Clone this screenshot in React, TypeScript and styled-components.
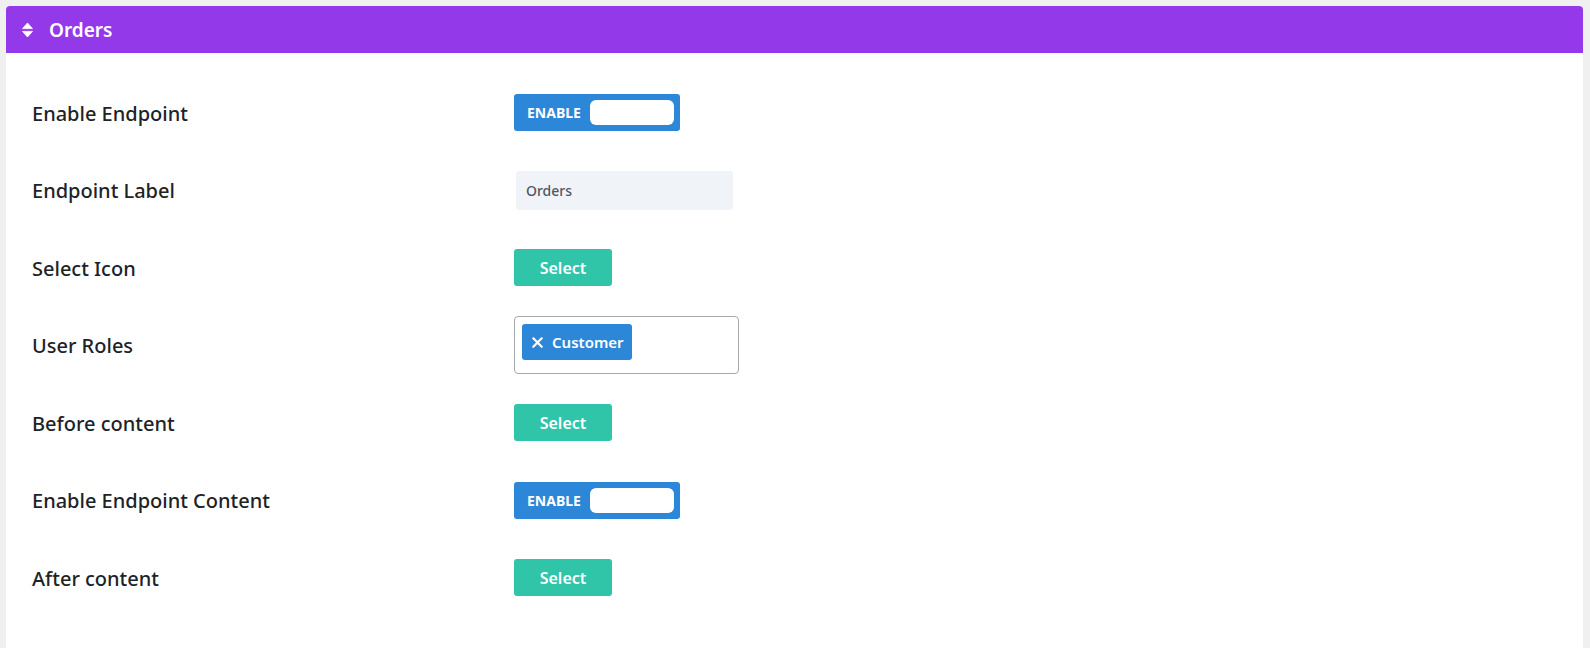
import styled, { createGlobalStyle } from "styled-components";

const GlobalStyle = createGlobalStyle`
  html, body {
    margin: 0;
    padding: 0;
    background: #f0f0f1;
  }
  body {
    font-family: "Noto Sans", "Open Sans", sans-serif;
    color: #1d2327;
  }
`;

const SortIcon = () => (
  <svg width="11" height="16" viewBox="0 0 11 16" aria-hidden="true">
    <path d="M5.5 1 L10.5 6.6 H0.5 Z" fill="#fff" stroke="#fff" strokeWidth="0.8" strokeLinejoin="round" />
    <path d="M5.5 15 L10.5 9.4 H0.5 Z" fill="#fff" stroke="#fff" strokeWidth="0.8" strokeLinejoin="round" />
  </svg>
);

const CloseIcon = () => (
  <svg width="11" height="11" viewBox="0 0 10 10" aria-hidden="true">
    <path d="M1.2 1.2 L8.8 8.8 M8.8 1.2 L1.2 8.8" stroke="#fff" strokeWidth="2" strokeLinecap="round" />
  </svg>
);

const App = () => {
  return (
    <>
      <GlobalStyle />
      <Page>
        <Panel>
          <PanelHeader>
            <SortIcon />
            <Title>Orders</Title>
          </PanelHeader>
          <Body>
            <Row>
              <Label>Enable Endpoint</Label>
              <Toggle>
                <ToggleText>ENABLE</ToggleText>
                <Knob />
              </Toggle>
            </Row>
            <Row>
              <Label>Endpoint Label</Label>
              <TextInput defaultValue="Orders" />
            </Row>
            <Row>
              <Label>Select Icon</Label>
              <SelectButton>Select</SelectButton>
            </Row>
            <Row>
              <Label>User Roles</Label>
              <MultiSelect>
                <Tag>
                  <CloseIcon />
                  Customer
                </Tag>
              </MultiSelect>
            </Row>
            <Row>
              <Label>Before content</Label>
              <SelectButton>Select</SelectButton>
            </Row>
            <Row>
              <Label>Enable Endpoint Content</Label>
              <Toggle>
                <ToggleText>ENABLE</ToggleText>
                <Knob />
              </Toggle>
            </Row>
            <Row>
              <Label>After content</Label>
              <SelectButton>Select</SelectButton>
            </Row>
          </Body>
        </Panel>
      </Page>
    </>
  );
};

const Page = styled.div`
  height: 648px;
  padding: 6px 7px 0 6px;
  box-sizing: border-box;
`;

const Panel = styled.section`
  background: #ffffff;
  height: 100%;
  border-radius: 4px 4px 0 0;
`;

const PanelHeader = styled.header`
  display: flex;
  align-items: center;
  gap: 16px;
  height: 47px;
  padding: 0 16px;
  background: #9339ea;
  border-radius: 4px 4px 0 0;
`;

const Title = styled.h2`
  margin: 0;
  color: #ffffff;
  font-size: 19px;
  font-weight: 600;
`;

const Body = styled.div`
  padding: 21px 0 0 26px;
`;

const Row = styled.div`
  display: grid;
  grid-template-columns: 482px 1fr;
  align-items: center;
  height: 77.5px;
`;

const Label = styled.div`
  font-size: 20px;
  font-weight: 500;
  color: #1d2327;
  margin-top: 1px;
`;

const Toggle = styled.div`
  display: flex;
  align-items: center;
  justify-content: space-between;
  width: 166px;
  height: 37px;
  padding: 0 6px 0 13px;
  box-sizing: border-box;
  background: #2d87d8;
  border-radius: 3px;
`;

const ToggleText = styled.span`
  color: #ffffff;
  font-size: 14px;
  font-weight: 700;
`;

const Knob = styled.span`
  width: 84px;
  height: 25px;
  background: #ffffff;
  border-radius: 6px;
`;

const TextInput = styled.input`
  width: 217px;
  height: 39px;
  margin-left: 2px;
  padding: 0 10px;
  box-sizing: border-box;
  border: none;
  border-radius: 3px;
  background: #f0f4f8;
  color: #50575e;
  font-family: inherit;
  font-size: 14px;
  font-weight: 500;
  outline: none;
`;

const SelectButton = styled.button`
  width: 98px;
  height: 37px;
  border: none;
  border-radius: 3px;
  background: #30c4a9;
  color: #ffffff;
  font-family: inherit;
  font-size: 16px;
  font-weight: 600;
  cursor: pointer;
`;

const MultiSelect = styled.div`
  display: flex;
  align-items: flex-start;
  width: 225px;
  height: 58px;
  padding: 7px;
  box-sizing: border-box;
  border: 1px solid #a7aaad;
  border-radius: 4px;
`;

const Tag = styled.span`
  display: inline-flex;
  align-items: center;
  gap: 9px;
  height: 36px;
  padding: 0 8px 0 10px;
  box-sizing: border-box;
  background: #2d87d8;
  border-radius: 3px;
  color: #ffffff;
  font-size: 15px;
  font-weight: 600;
`;

export default App;
